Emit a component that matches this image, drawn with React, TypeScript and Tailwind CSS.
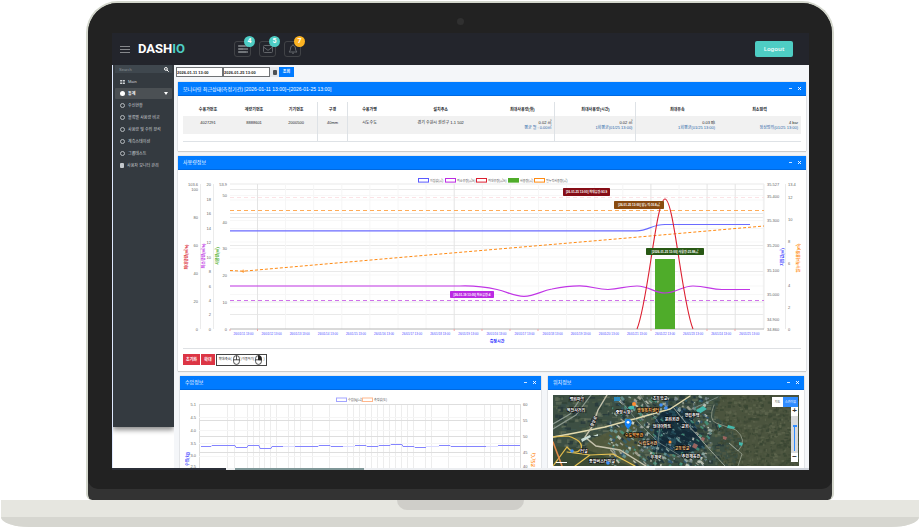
import React from "react";

const KR = "font-['Liberation_Sans','Noto_Sans_CJK_KR',sans-serif]";

function ListIcon() {
  return (
    <svg viewBox="0 0 10 8" className="h-2 w-2.5" fill="#63666b">
      <rect x="0" y="0" width="10" height="2" />
      <rect x="0" y="3" width="10" height="2" />
      <rect x="0" y="6" width="10" height="2" />
      <rect x="1" y="0.6" width="6" height="0.8" fill="#8b8e92" />
      <rect x="1" y="3.6" width="4" height="0.8" fill="#8b8e92" />
      <rect x="1" y="6.6" width="7" height="0.8" fill="#8b8e92" />
    </svg>
  );
}

function MailIcon() {
  return (
    <svg viewBox="0 0 10 8" className="h-2 w-2.5" fill="none" stroke="#63666b" strokeWidth="1">
      <rect x="0.5" y="0.5" width="9" height="7" rx="1" />
      <path d="M0.8 2.2 L5 5.4 L9.2 2.2" />
    </svg>
  );
}

function BellIcon() {
  return (
    <svg viewBox="0 0 10 10" className="h-2.5 w-2.5" fill="none" stroke="#63666b" strokeWidth="1">
      <path d="M1 8 C2.4 6.8 2.4 5.5 2.6 4 C2.9 2.3 3.8 1.5 5 1.5 C6.2 1.5 7.1 2.3 7.4 4 C7.6 5.5 7.6 6.8 9 8 Z" />
      <path d="M5 0.3 V1.5 M4 9.2 H6" />
    </svg>
  );
}

function Notice({ label, count, color, children }: { label: string; count: number; color: string; children: React.ReactNode }) {
  return (
    <button aria-label={label} className="relative flex h-4 w-[17px] items-center justify-center rounded-[3px] border border-[#414347]">
      {children}
      <span className={`absolute -top-[6px] -right-[5px] flex size-[11px] items-center justify-center rounded-full text-[7px] leading-none font-bold text-white ${color}`}>
        {count}
      </span>
    </button>
  );
}

function TopBar() {
  return (
    <header className="flex h-8 items-center bg-[#23252c] pr-4 pl-2 font-[Roboto,sans-serif]">
      <button aria-label="Toggle menu" className="flex w-[10px] flex-col gap-[2px]">
        <span className="h-px w-full bg-[#85878b]" />
        <span className="h-px w-full bg-[#85878b]" />
        <span className="h-px w-full bg-[#85878b]" />
      </button>
      <a href="#" className="ml-2 w-[47px] text-[13px] leading-4 font-bold text-white">
        DASH<span className="text-[#4ecdc4]">IO</span>
      </a>
      <nav className="ml-[49px] flex gap-2">
        <Notice label="Tasks" count={4} color="bg-[#4ecdc4]"><ListIcon /></Notice>
        <Notice label="Messages" count={5} color="bg-[#4ecdc4]"><MailIcon /></Notice>
        <Notice label="Alerts" count={7} color="bg-[#fcb322]"><BellIcon /></Notice>
      </nav>
      <button className="ml-auto h-4 w-[38px] rounded-[2px] bg-[#4ecdc4] font-['Noto_Sans',sans-serif] text-[6px] leading-4 font-semibold text-[#e9fbf9]">
        Logout
      </button>
    </header>
  );
}

const MENU = ["수신현황", "블록별 사용량 비교", "사용량 및 수위 분석", "계측스테이션", "그룹테스트"];

function Sidebar() {
  return (
    <aside className="h-[362px] w-[61px] shrink-0 bg-[#343a40] px-[2px] text-[4px] leading-[5px] text-[#d0d4d8] shadow-[0_3px_5px_rgba(0,0,0,0.45)]">
      <label className="flex h-2 items-center bg-[#3f474e] pr-[3px] pl-1">
        <input aria-label="Search" placeholder="Search" className="w-0 flex-1 bg-transparent placeholder:text-[#8d949b]" />
        <svg viewBox="0 0 6 6" className="size-[5px]" fill="none" stroke="#fff" strokeWidth="1.2">
          <circle cx="2.3" cy="2.3" r="1.7" />
          <path d="M3.6 3.6 L5.7 5.7" />
        </svg>
      </label>
      <a href="#" className="mt-[6px] mb-1 flex h-[5px] items-center gap-[3px] pl-[5px]">
        <svg viewBox="0 0 6 5" className="h-1 w-[5px]" fill="#d0d4d8">
          <path d="M0 0h2.6v2H0zM3.4 0H6v2H3.4zM0 3h2.6v2H0zM3.4 3H6v2H3.4z" />
        </svg>
        Main
      </a>
      <a href="#" className="flex h-[11px] items-center gap-[3px] rounded-[1px] bg-[#4b5054] pl-[5px] font-bold text-white">
        <span className="size-[5px] rounded-full bg-white" />
        <span>통계</span>
        <svg viewBox="0 0 4 3" className="mr-1 ml-auto h-[3px] w-1" fill="#fff"><path d="M0 0h4L2 3z" /></svg>
      </a>
      <ul>
        {MENU.map((m) => (
          <li key={m}>
            <a href="#" className="flex h-3 items-center gap-[3px] pl-[5px] whitespace-nowrap">
              <span className="size-[5px] shrink-0 rounded-full border border-[#b4b9bd]" />
              {m}
            </a>
          </li>
        ))}
        <li>
          <a href="#" className="flex h-3 items-center gap-[3px] pl-[5px] whitespace-nowrap">
            <span className="h-[5px] w-1 shrink-0 rounded-[1px] bg-[#c3c8cc]" />
            사용자 모니터 관리
          </a>
        </li>
      </ul>
    </aside>
  );
}

function Card({ title, className, children }: { title: string; className?: string; children: React.ReactNode }) {
  return (
    <section className={`bg-white shadow-[0_0_1px_rgba(0,0,0,0.3),0_1px_1px_rgba(0,0,0,0.12)] ${className ?? ""}`}>
      <header className="flex h-[14px] items-center border-b border-[#0069e0] bg-[#007bff] pr-[5px] pl-[5px] text-white">
        <h2 className="text-[5px] leading-[6px] whitespace-nowrap">{title}</h2>
        <button aria-label="Collapse" className="ml-auto flex h-[5px] w-[3px] items-center"><span className="h-px w-full bg-[#cfe5ff]" /></button>
        <button aria-label="Close" className="ml-[6px]">
          <svg viewBox="0 0 3 3" className="size-[3px]" stroke="#fff" strokeWidth="0.9"><path d="M0 0L3 3M3 0L0 3" /></svg>
        </button>
      </header>
      {children}
    </section>
  );
}

const COLUMNS = [
  { w: "w-[8.1%]", h: "수용가번호", a: "4027291" },
  { w: "w-[6.8%]", h: "계량기번호", a: "8888601" },
  { w: "w-[6.9%]", h: "기기번호", a: "2000500", rule: true },
  { w: "w-[4.8%]", h: "구경", a: "40mm", rule: true },
  { w: "w-[7.1%]", h: "수용가명", a: "시도수도" },
  { w: "w-[16%]", h: "설치주소", a: "경기 수원시 권선구 1-1 502" },
  { w: "w-[10.5%]", h: "최대사용량(월)", a: "0.02 ㎥", b: "평균 월 : 0.00㎥", rule: true },
  { w: "w-[13.1%]", h: "최대사용량(시간)", a: "0.02 ㎥", b: "1회평균(01/25 13:00)", rule: true },
  { w: "w-[13.3%]", h: "최대유속", a: "0.03 ㎧", b: "1회평균(01/25 13:00)" },
  { w: "w-[13.4%]", h: "최소압력", a: "4 bar", b: "정상범위(01/25 13:00)" },
];

function StatusTable() {
  return (
    <table className="w-full table-fixed border-b border-[#dee2e6] text-[4px] leading-[5px] text-[#24272b]">
      <thead>
        <tr className="h-[14px]">
          {COLUMNS.map((c) => (
            <th key={c.h} className={`${c.w} p-0 text-center font-bold whitespace-nowrap ${c.rule ? "border-r border-[#dee2e6]" : ""}`}>{c.h}</th>
          ))}
        </tr>
      </thead>
      <tbody>
        <tr className="h-[18px] bg-[#f1f1f1]">
          {COLUMNS.map((c) => (
            <td key={c.h} className={`px-[3px] pt-1 pb-0 align-top whitespace-nowrap ${c.rule ? "border-r border-[#dee2e6]" : ""} ${c.b ? "text-right" : "text-center"}`}>
              {c.a}
              {c.b && <span className="block text-[#2a65a8]">{c.b}</span>}
            </td>
          ))}
        </tr>
        <tr className="h-[7px]">
          {COLUMNS.map((c) => (
            <td key={c.h} className={`p-0 ${c.rule ? "border-r border-[#dee2e6]" : ""}`} />
          ))}
        </tr>
      </tbody>
    </table>
  );
}

function Axis({ x, anchor, ticks }: { x: number; anchor: "start" | "end"; ticks: [number, string][] }) {
  return (
    <g textAnchor={anchor} fill="#666" fontSize="4">
      {ticks.map(([y, t]) => (
        <text key={t + y} x={x} y={y + 1.5}>{t}</text>
      ))}
    </g>
  );
}

function AxisTitle({ x, y, color, text }: { x: number; y: number; color: string; text: string }) {
  return (
    <text x={x} y={y} fill={color} fontSize="4" fontWeight="bold" textAnchor="middle" dominantBaseline="central" transform={`rotate(-90 ${x} ${y})`}>{text}</text>
  );
}

function Tag({ x, y, w, h, color, text }: { x: number; y: number; w: number; h: number; color: string; text: string }) {
  return (
    <g>
      <rect x={x} y={y} width={w} height={h} rx="0.8" fill={color} />
      <text x={x + w / 2} y={y + h / 2 + 1.1} fill="#fff" fontSize="3" fontWeight="bold" textAnchor="middle">{text}</text>
    </g>
  );
}

const LEGEND = [
  { x: 418, c: "#5a5aff", t: "지침값(㎥)" },
  { x: 445, c: "#bb2be3", t: "최소유량(㎥/h)" },
  { x: 476, c: "#dc1f30", t: "최대유량(㎥/h)" },
  { x: 508, c: "#4fac2a", t: "사용량(㎥)", fill: true },
  { x: 534, c: "#ff8a12", t: "일누적사용량(㎥)" },
];

const STRONG_Y = [184, 189.5, 213.5, 217.5, 245.5, 271.5, 302, 314.5];
const FAINT_Y = [195.5, 200, 220.5, 228.5, 242, 248.5, 257, 263, 275, 286, 294.5, 307];

function FlowChart() {
  return (
    <svg viewBox="183 174 618 174" className="block w-full" role="img" aria-label="사용량 정보">
      <g stroke="#e9e9e9">
        {STRONG_Y.map((y) => <path key={y} d={`M230 ${y}H764`} />)}
      </g>
      <g stroke="#f7f7f7">
        {FAINT_Y.map((y) => <path key={y} d={`M230 ${y}H764`} />)}
      </g>
      {Array.from({ length: 19 }, (_, i) => (
        <path key={i} d={`M${257.5 + i * 28.1} 184V329`} stroke={[0, 7, 14, 16, 17].includes(i) ? "#e4e4e4" : "#f6f6f6"} />
      ))}
      <path d="M200.5 184V329M213.5 184V329M785.5 184V329M764 184V329" stroke="#ebebeb" />
      <path d="M230 329H764" stroke="#b4b4b4" />
      {[230, 257.5, 454.2, 482, 510, 538, 651, 707, 735].map((x) => <path key={x} d={`M${x} 329V331`} stroke="#f3a3a3" />)}

      <Axis x={198} anchor="end" ticks={[[184, "103.6"], [189.5, "100"], [217.5, "80"], [245.5, "60"], [273, "40"], [301, "20"], [329, "0"]]} />
      <Axis x={211} anchor="end" ticks={[[184, "20"], [199, "18"], [213, "16"], [228, "14"], [242, "12"], [257, "10"], [271, "8"], [286, "6"], [300, "4"], [314, "2"], [329, "0"]]} />
      <Axis x={227} anchor="end" ticks={[[184, "53.9"], [195, "50"], [222, "40"], [248, "30"], [275, "20"], [302, "10"], [329, "0"]]} />
      <Axis x={767} anchor="start" ticks={[[184, "35.527"], [196, "35.400"], [220, "35.300"], [245, "35.200"], [270, "35.100"], [294, "35.000"], [319, "34.900"], [329, "34.860"]]} />
      <Axis x={788} anchor="start" ticks={[[184, "13.4"], [197, "12"], [219, "10"], [241, "8"], [263, "6"], [285, "4"], [307, "2"], [329, "0"]]} />

      <AxisTitle x={186} y={257} color="#d9222f" text="최대유량(㎥/h)" />
      <AxisTitle x={203} y={256} color="#bb2be3" text="최소유량(㎥/h)" />
      <AxisTitle x={217} y={256} color="#4fac2a" text="사용량(㎥)" />
      <AxisTitle x={782} y={257} color="#4a4aff" text="지침값(㎥)" />
      <AxisTitle x={798} y={258} color="#ff8a12" text="일누적사용량(㎥)" />

      <g fontSize="3" fill="#555">
        {LEGEND.map((l) => (
          <g key={l.x}>
            <rect x={l.x + 0.5} y="178.5" width="10" height="3.6" fill={l.fill ? l.c : "#fff"} stroke={l.c} />
            <text x={l.x + 12} y="181.5">{l.t}</text>
          </g>
        ))}
      </g>

      <path d="M230 197.5H764" stroke="#fbe3e6" strokeDasharray="4 3" />
      <path d="M230 210.5H764" stroke="#ffab57" strokeDasharray="4 3" />
      <path d="M230 300.5H764" stroke="#cf72ea" strokeDasharray="4 3" />
      <rect x="655" y="259" width="20" height="70" fill="#4fac2a" />
      <path d="M230 230.8H637C648 230.8 652 224.5 665 224.5H750" stroke="#6b6bff" strokeWidth="1.2" fill="none" />
      <path d="M230 286H460C475 285.5 484 286.5 497 289.5C508 292 514 296.3 524 296.3C535 296 541 291 552 289C564 286.5 570 285.7 580 285.8C592 286 597 289.5 608 289.5C620 289 626 286 637 286C649 286 654 293 665 293C676 293 682 286 693 286C706 286 711 289.5 722 289.5H750" stroke="#c136e6" strokeWidth="1.2" fill="none" />
      <path d="M230 270.5L243 271.2L257 270L410 256.6L610 239.5L764 226" stroke="#ff8a12" strokeDasharray="3 2" fill="none" />
      <path d="M241.5 271.2H245M243.2 269.5V273" stroke="#ff8a12" strokeWidth="0.7" />
      <path d="M637 329C648 303 656 199 665 199C674 199 682 303 693 329" stroke="#dc1f30" strokeWidth="1.1" fill="none" />

      <Tag x={563} y={188} w={47} h={8} color="#860d16" text="[26-01-25 13:00] 최대유량:93.9" />
      <Tag x={614} y={201} w={50} h={8} color="#8a4b10" text="[26-01-25 13:00] 일누적:10.8㎥" />
      <Tag x={450} y={291} w={44} h={7} color="#bb2be3" text="[26-01-19 13:00] 최소유량:4" />
      <Tag x={646} y={248} w={58} h={7} color="#285814" text="[2026-01-25 13:00] 사용량:25.88㎥" />

      <g fontSize="3" fill="#4a4aff" textAnchor="middle">
        {Array.from({ length: 19 }, (_, i) => (
          <text key={i} x={243.5 + i * 28.1} y="335">{i < 9 ? `26/01/1${i + 1} 13:00` : `26/01/${i + 7} 13:00`}</text>
        ))}
      </g>
      <text x="497" y="342.8" fontSize="4" fontWeight="bold" fill="#2222ff" textAnchor="middle">측정시간</text>
    </svg>
  );
}

const GRID_X = [227, 234, 247, 253, 259, 264, 270, 276, 288, 294, 300, 312, 329, 347, 353, 359, 365, 371, 377, 383, 389, 395, 401, 407, 413, 425, 431, 448, 466, 484, 490, 502, 508, 514];

function PressureChart() {
  return (
    <svg viewBox="185 390 351 92" className="block w-full" role="img" aria-label="수압 정보">
      <g stroke="#ededed">
        {GRID_X.map((x) => <path key={x} d={`M${x + 0.5} 404V482`} />)}
      </g>
      <path d="M199 404.5H520M199 420.5H520M199 436.5H520M199 452.5H520M520.5 404V482M199.5 404V482" stroke="#dedede" />
      <path d="M199 417.5H520M199 430.5H520M199 443.5H520M199 456.5H520" stroke="#f5f5f5" />
      <Axis x={196} anchor="end" ticks={[[404, "5.1"], [417, "4.5"], [430, "4.0"], [443, "3.5"], [455, "3.0"], [466, "2.5"]]} />
      <Axis x={523} anchor="start" ticks={[[404, "60"], [420, "55"], [436, "50"], [452, "45"], [466, "40"]]} />
      <g fontSize="3" fill="#555">
        <rect x="336.5" y="398" width="10" height="3.5" fill="#fff" stroke="#a3a5ff" />
        <text x="348" y="401">수압(㎏/㎠)</text>
        <rect x="362.5" y="398" width="10" height="3.5" fill="#fff" stroke="#ffb78c" />
        <text x="374" y="401">측정값(도)</text>
      </g>
      <path
        d="M201 446.5H211L212 445.5H235L236 447.5H247L248 445.5H259L260 448.5H271L272 446.5H283M295 446.5H318L319 445.5H330L331 446.5H343M355 445.5H366L367 446.5H378L379 445.5H390L391 444.5H402L403 446.5H414L415 447.5H426M439 445.5H450L451 446.5H486M498 445.5H520"
        stroke="#8484ff"
        strokeWidth="1"
        fill="none"
      />
      <path d="M283 446.5H295M343 446.5H355M426 446.5H439M486 446.5H498" stroke="#dcdcff" />
      <AxisTitle x={187} y={459} color="#5a5aff" text="수압(㎏)" />
      <AxisTitle x={533} y={460} color="#ff8a12" text="온도(℃)" />
    </svg>
  );
}

function hash(n: number) {
  const v = Math.sin(n * 127.1 + 11.7) * 43758.5453;
  return v - Math.floor(v);
}

const ROOFS = ["#6e9f9f", "#9fb8b2", "#34606e", "#46997f", "#b0b0a2", "#1e3340", "#7f9096", "#d2d6ca", "#2f587a"];
const LAND = ["#2d4034", "#4f5f48", "#3e544e", "#67715c", "#243639", "#5a6856"];
const WOODS = ["#525a44", "#3d4836", "#5d654e", "#374431", "#4a543e"];

function SatelliteMap() {
  return (
    <svg viewBox="553 395 246 71" preserveAspectRatio="xMidYMid slice" className="block w-full" role="img" aria-label="위성 지도">
      <rect x="553" y="395" width="246" height="71" fill="#3d4f43" />
      {Array.from({ length: 700 }, (_, i) => (
        <rect key={i} x={553 + hash(i) * 165} y={394 + hash(i + 900) * 72} width={1.5 + hash(i + 40) * 5} height={1 + hash(i + 70) * 3} fill={LAND[i % 6]} opacity="0.75" />
      ))}
      <path d="M590 440L636 420L640 466H575Z" fill="#535a3c" opacity="0.85" />
      <path d="M553 446L585 449L630 466H553Z" fill="#3a4934" opacity="0.9" />
      <path d="M722 395H799V466H735L742 440L728 426L714 415Z" fill="#4b543e" />
      {Array.from({ length: 1000 }, (_, i) => (
        <rect key={i} x={714 + (1 - Math.pow(hash(i + 300), 1.3)) * 84} y={395 + hash(i + 2100) * 70} width={1 + hash(i) * 3} height={1 + hash(i + 8) * 2} fill={WOODS[i % 5]} opacity="0.75" />
      ))}
      <path d="M668 405L690 410L697 432L705 447L682 455L653 452L655 420Z" fill="#1a343f" />
      {Array.from({ length: 420 }, (_, i) => {
        const x = 608 + hash(i + 51) * 102;
        const y = 395 + hash(i + 651) * 70;
        return <rect key={i} x={x} y={y} width={1 + hash(i) * 3.5} height={1 + hash(i + 4) * 2} fill={ROOFS[i % 9]} opacity="0.8" transform={`rotate(${hash(i) * 50} ${x} ${y})`} />;
      })}
      {Array.from({ length: 55 }, (_, i) => (
        <rect key={i} x={652 + hash(i + 5) * 40} y={408 + hash(i + 61) * 38} width={3 + hash(i) * 6} height="3" fill={i % 3 ? "#142a38" : "#234a58"} transform={`rotate(20 ${670} ${430})`} />
      ))}
      <g fill="none" strokeLinecap="round">
        <path d="M553 437L575 433L605 427L638 418L670 409L690 396" stroke="#e3daaf" strokeWidth="1.4" />
        <path d="M607 395L598 410L592 427L585 437L596 446L620 450L646 466" stroke="#c6c3ad" strokeWidth="1.4" />
        <path d="M553 424L570 414L583 395M553 429L576 415L591 395" stroke="#8c9a90" strokeWidth="1.2" />
        <path d="M553 437L568 436Q584 441 581 449Q575 456 567 447L553 466" stroke="#e2bb4c" strokeWidth="1.2" />
        <path d="M567 452L590 455L613 454L635 466M590 455L575 466" stroke="#ecc654" strokeWidth="1.2" />
        <path d="M553 442L562 466" stroke="#e08a4a" strokeWidth="1.6" />
        <path d="M673 407L686 423L699 437L711 451L725 466" stroke="#a5aea2" strokeWidth="0.9" />
        <path d="M714 405Q708 420 716 423L736 430Q748 440 738 451L729 443L742 454L738 466" stroke="#97a08f" strokeWidth="0.8" />
        <path d="M690 410L718 397M640 395L660 425L655 466M618 397L638 422L658 442L690 462" stroke="#879a94" strokeWidth="0.7" />
      </g>
      <g fill="#42b8ac">
        <rect x="614" y="397" width="6" height="4" fill="#2c8bc0" />
        <path d="M696 410l7-4 4 3-8 5zM628 407l6-2v4l-5 1zM718 424l4 2-3 2zM728 425l7 2-1 2-7-1zM739 442l4 1-1 3-3-1z" />
        <path d="M581 439l9-4 1 2-9 5zM593 436l5-2v2z" fill="#c9dcd6" />
      </g>
      <g fill="#9a6560">
        <path d="M694 443l4 2-2 4-4-2zM702 437l3 1-1 3-3-1zM723 436l4 1-1 3-3-1z" />
      </g>
      <g fontSize="4" fontWeight="bold" textAnchor="middle" fill="#fff" stroke="#000" strokeWidth="1" paintOrder="stroke">
        <text x="577" y="401">평화마을</text>
        <text x="576" y="412">역전사거리</text>
        <text x="623" y="414">중앙시장</text>
        <text x="648" y="412" fill="#ffc06b">행정복지센터</text>
        <text x="660" y="400">초등학교</text>
        <text x="672" y="421">문화회관</text>
        <text x="662" y="428">현대아파트</text>
        <text x="692" y="417">연립주택</text>
        <text x="685" y="428">교회</text>
        <text x="634" y="437" fill="#ffb15a">수도박물관</text>
        <text x="648" y="445" fill="#ffd1a0">시립도서관</text>
        <text x="682" y="450" fill="#ffc98a">고등학교</text>
        <text x="691" y="458">주민체육관</text>
        <text x="656" y="459">우체국</text>
        <text x="602" y="463">종합버스터미널</text>
        <text x="584" y="453">터널</text>
        <text x="595" y="422" transform="rotate(-65 595 422)">중앙로</text>
      </g>
      <g fill="#3d8df5">
        <circle cx="661" cy="405" r="1.8" />
        <circle cx="666" cy="408" r="1.8" />
        <circle cx="572" cy="451" r="1.8" />
        <circle cx="608" cy="463" r="1.8" />
      </g>
      <circle cx="634" cy="404" r="2" fill="#ff8d32" />
      <circle cx="670" cy="442" r="1.5" fill="#ff8d32" />
      <path d="M628 429C624.8 425.5 624.7 424.3 624.7 422.4A3.4 3.4 0 0 1 631.5 422.4C631.5 424.3 631.2 425.5 628 429Z" fill="#1684f8" />
      <circle cx="628.1" cy="422.3" r="1.4" fill="#fff" />
      <path d="M556 462.5H567" stroke="#fff" />
    </svg>
  );
}

function MapPanel() {
  return (
    <div className="relative m-[5px]">
      <SatelliteMap />
      <div className="absolute top-[2px] right-px flex h-[10px] text-[3px] leading-[10px] shadow-sm">
        <button className="w-[11px] bg-white text-[#444]">지도</button>
        <button className="w-[15px] bg-[#2f8cff] text-white">스카이뷰</button>
      </div>
      <div className="absolute top-3 right-px flex w-[7px] flex-col items-center bg-[#d9dadb] text-[8px] font-bold text-[#333]">
        <button aria-label="Zoom in" className="flex h-[9px] w-full items-center justify-center bg-white leading-none">+</button>
        <div className="flex h-[37px] flex-col items-center pt-[9px]">
          <span className="h-[2px] w-1 bg-[#2f8cff]" />
          <span className="h-6 w-px bg-[#2f8cff]" />
        </div>
        <button aria-label="Zoom out" className="flex h-[9px] w-full items-center justify-center bg-white leading-none">−</button>
      </div>
    </div>
  );
}

function MouseIcon({ solid }: { solid?: boolean }) {
  return (
    <svg viewBox="0 0 7 10" className="h-[10px] w-[7px] shrink-0" fill="none" stroke="#222" strokeWidth="0.8">
      <rect x="0.6" y="0.6" width="5.8" height="8.8" rx="2.8" />
      <path d="M0.6 4.8H6.4M3.5 0.6V4.8" />
      {solid && <path d="M3.5 0.6H4Q6.4 1 6.4 4.8H3.5Z" fill="#222" />}
    </svg>
  );
}

function FilterBar() {
  const field = "h-[10px] w-[47px] border border-[#6f7275] bg-white text-[4px] leading-[8px] font-bold text-[#222]";
  return (
    <form className="-ml-[2px] flex">
      <input aria-label="시작일" defaultValue="2026-01-11 13:00" className={field} />
      <input aria-label="종료일" defaultValue="2026-01-25 13:00" className={field} />
      <button type="button" aria-label="달력" className="flex h-[10px] w-[9px] items-center justify-center bg-[#e4e7ea]">
        <span className="h-[5px] w-1 rounded-[1px] bg-[#4c5054]" />
      </button>
      <button type="button" className="h-[10px] w-[15px] bg-[#007bff] text-[4px] leading-[10px] font-bold text-white">조회</button>
    </form>
  );
}

function Dashboard() {
  return (
    <main className="min-w-0 flex-1 bg-[#f4f6f9] pt-[2px] pr-[3px] pl-1">
      <FilterBar />
      <Card title="모니터링 최근상태(측정기간) [2026-01-11 13:00]~[2026-01-25 13:00]" className="mt-[5px]">
        <div className="px-[5px] pt-[6px] pb-[9px]"><StatusTable /></div>
      </Card>
      <Card title="사용량정보" className="mt-[5px]">
        <div className="px-[5px] pt-1">
          <FlowChart />
          <div className="flex items-center border-t border-[#dfe1e4] py-[5px] text-[4px] leading-none">
            <button className="h-[11px] w-[17px] bg-[#dc3545] font-bold text-white">초기화</button>
            <button className="ml-px h-[11px] w-[14px] bg-[#dc3545] font-bold text-white">확대</button>
            <div className="ml-px flex h-3 w-[51px] items-center justify-center gap-px border border-[#444] text-[3px] whitespace-nowrap text-[#222]">
              <span>확대/축소(</span><MouseIcon /><span>) 이동하기(</span><MouseIcon solid /><span>)</span>
            </div>
          </div>
        </div>
      </Card>
      <div className="mt-[5px] flex gap-[7px] pr-[2px] pl-[2px]">
        <Card title="수압정보" className="min-w-0 flex-[361]">
          <div className="px-[5px]"><PressureChart /></div>
        </Card>
        <Card title="위치정보" className="min-w-0 flex-[256]"><MapPanel /></Card>
      </div>
    </main>
  );
}

export default function App() {
  return (
    <div className={`overflow-hidden bg-white pt-px ${KR}`}>
      <div className="mx-[86px] rounded-t-[32px] rounded-b-[6px] border-2 border-b-0 border-[#d3d6cc] bg-[#333] pb-[11px]">
        <div className="rounded-t-[30px] rounded-b-[10px] bg-[#222] pr-[23px] pb-[19px] pl-6">
          <div className="flex h-[30px] items-center justify-center pt-[7px]">
            <span className="size-[7px] rounded-full bg-[#303030]" />
          </div>
          <TopBar />
          <div className="flex h-[403px] overflow-hidden border-l border-[#dfe9ff] bg-white">
            <Sidebar />
            <Dashboard />
          </div>
          <div className="flex h-[2px]">
            <span className="w-[114px] bg-[#2b2f38]" />
            <span className="w-[9px] bg-[#eef0f1]" />
            <span className="w-[129px] bg-[#7f9798]" />
            <span className="flex-1 bg-[#eceef1]" />
            <span className="w-[154px] bg-[#cfd3da]" />
          </div>
        </div>
      </div>
      <div className="mx-px overflow-hidden rounded-b-[28px_10px] bg-[#e6e6e0]">
        <div className="mx-auto h-[10px] w-[127px] rounded-b-[10px] bg-[#cfcec9]" />
        <div className="mt-[7px] h-[10px] bg-[#d6d6d0]" />
      </div>
    </div>
  );
}
